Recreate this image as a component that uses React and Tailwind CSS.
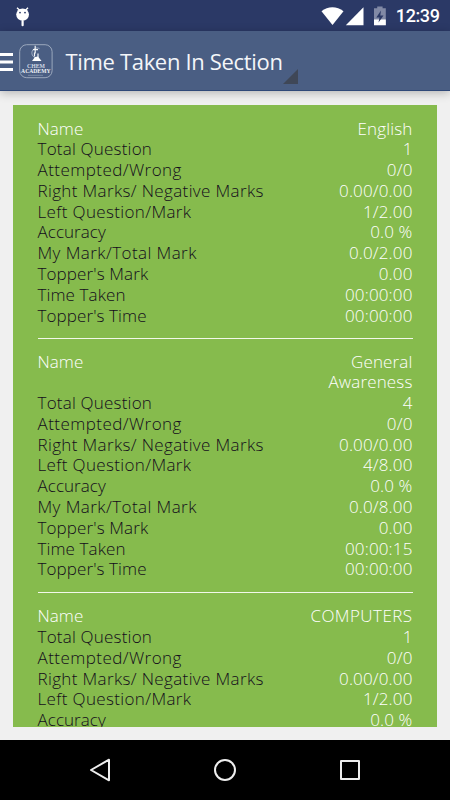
const labels = [
  ["Name", "tracking-[0.05px]"],
  ["Total Question", "tracking-[0.21px]"],
  ["Attempted/Wrong", "tracking-[0.45px]"],
  ["Right Marks/ Negative Marks", "tracking-[0.36px]"],
  ["Left Question/Mark", "tracking-[0.36px]"],
  ["Accuracy", "tracking-[0.05px]"],
  ["My Mark/Total Mark", "tracking-[0.43px]"],
  ["Topper's Mark", "tracking-[0.12px]"],
  ["Time Taken", "tracking-[0.1px]"],
  ["Topper's Time", "tracking-[0.1px]"],
];

const sections = [
  ["English", "1", "0/0", "0.00/0.00", "1/2.00", "0.0 %", "0.0/2.00", "0.00", "00:00:00", "00:00:00"],
  ["General Awareness", "4", "0/0", "0.00/0.00", "4/8.00", "0.0 %", "0.0/8.00", "0.00", "00:00:15", "00:00:00"],
  ["COMPUTERS", "1", "0/0", "0.00/0.00", "1/2.00", "0.0 %", "0.0/2.00", "0.00", "00:00:00", "00:00:00"],
];

function StatusBar() {
  return (
    <div className="flex h-[31px] shrink-0 items-center bg-[#2b3966] pl-[15px] pr-[10.5px] text-white">
      <svg width="16" height="20" viewBox="0 0 16 20" className="mt-0.5">
        <path d="M2 0.8L4.7 3.2M13 0.8L10.5 3.2" stroke="#fff" strokeWidth="1.4" />
        <ellipse cx="7.6" cy="7.6" rx="6.4" ry="6.2" fill="#fff" />
        <rect x="6.5" y="13" width="2.2" height="6.3" rx="1" fill="#fff" />
        <circle cx="5" cy="5.6" r="0.9" fill="#2b3966" />
        <circle cx="10" cy="5.6" r="0.9" fill="#2b3966" />
      </svg>
      <svg width="66" height="20" viewBox="0 0 66 20" className="ml-auto mr-[9px]">
        <path d="M0.5 5.2C6.8 -0.2 16 -0.2 22.5 5.2L11.5 19Z" fill="#fff" />
        <path d="M24.8 19.2L42.5 1.2V19.2Z" fill="#fff" />
        <path d="M53 2.2h3.2V0.4h5.4v1.8h3.2v17H53z" fill="#8189a5" />
        <path d="M53 13.5h11.8v5.7H53z" fill="#fff" />
        <path d="M60 4.5L55.3 11.4h3.2l-1 5.2 5-7h-3.2z" fill="#2b3966" />
      </svg>
      <span className="mt-px font-[Roboto] text-[18px] font-medium leading-none tracking-[-0.4px]">12:39</span>
    </div>
  );
}

function Logo() {
  return (
    <svg width="34" height="35" viewBox="0 0 34 35" className="ml-[5.5px] mt-0.5">
      <rect x="0.7" y="0.7" width="32.4" height="33" rx="7" fill="none" stroke="#a4b0c3" strokeWidth="0.9" />
      <path d="M20.5 4.7a5 5 0 1 0-1 9" fill="none" stroke="#b9c4d5" strokeWidth="0.8" />
      <path d="M16.2 1.8v7.8M14 5.6h5M15.5 8.5v4M19 9.5v4" fill="none" stroke="#f1f4f8" strokeWidth="1.2" />
      <path d="M13 17h9.5l-3.5-4.5-3 0.5z" fill="#fff" />
      <text x="17" y="23.8" textAnchor="middle" textLength="18" lengthAdjust="spacingAndGlyphs" fontFamily="Liberation Serif, serif" fontSize="7" fontWeight="700" fill="#cfd8e4">CHEM</text>
      <text x="16.8" y="29.4" textAnchor="middle" textLength="29.5" lengthAdjust="spacingAndGlyphs" fontFamily="Liberation Serif, serif" fontSize="7" fontWeight="700" fill="#eef2f7">ACADEMY</text>
      <path d="M9 31.3h15" stroke="#8d9cb5" strokeWidth="0.7" />
    </svg>
  );
}

function AppBar() {
  return (
    <div className="relative z-10 flex h-[60px] shrink-0 items-center border-b border-[#2f4878] bg-[#4a5e83] shadow-[0_2px_9px_rgba(0,0,0,0.25)]">
      <svg width="13" height="18" viewBox="0 0 13 18" className="mt-[3px]" fill="#fff">
        <path d="M0 0h13v3H0zM0 7.5h13v3H0zM0 15h13v3H0z" />
      </svg>
      <Logo />
      <h1 className="ml-[13px] whitespace-nowrap text-[22px] font-normal leading-none tracking-[-0.33px] text-[#f4f6f9]">Time Taken In Section</h1>
      <svg width="15" height="15" viewBox="0 0 15 15" className="absolute left-[283px] top-[38px]">
        <path d="M15 0V15H0Z" fill="#3f4757" />
      </svg>
    </div>
  );
}

function Section({ values, last }) {
  return (
    <div>
      {labels.map(([label, tracking], i) => (
        <div key={label} className={"flex justify-between pb-[1.1px] leading-[19.7px] " + (i === 0 ? "text-white" : "text-[#130c1c]")}>
          <span className={"whitespace-nowrap " + tracking}>{label}</span>
          <span className={"max-w-[106px] text-right text-white " + (values[i] === "COMPUTERS" ? "tracking-[0.45px]" : "tracking-[0.15px]")}>
            {values[i]}
          </span>
        </div>
      ))}
      {!last && <div className="mb-[13px] mt-3 h-px bg-[#f2f8ea]" />}
    </div>
  );
}

function NavBar() {
  return (
    <div className="flex h-[60px] shrink-0 items-center justify-between bg-black pl-[89px] pr-[89px]">
      <svg width="22" height="24" viewBox="0 0 22 24" fill="none" stroke="#eee" strokeWidth="2" strokeLinejoin="round">
        <path d="M20 1.7V22.3L2 12Z" />
      </svg>
      <svg width="24" height="24" viewBox="0 0 24 24" fill="none" stroke="#eee" strokeWidth="2">
        <circle cx="12" cy="12" r="10" />
      </svg>
      <svg width="22" height="22" viewBox="0 0 22 22" fill="none" stroke="#eee" strokeWidth="2" strokeLinejoin="round">
        <rect x="2" y="2" width="18" height="18" />
      </svg>
    </div>
  );
}

export default function App() {
  return (
    <div className="flex h-[800px] w-[450px] flex-col overflow-hidden bg-[#f0f0f0] font-['Open_Sans',sans-serif]">
      <StatusBar />
      <AppBar />
      <div className="mx-[13px] mb-[13px] mt-[14px] min-h-0 flex-1 overflow-hidden bg-[#86bb4d] px-[24.5px] pt-[13.5px] text-[17px] font-light">
        {sections.map((values, i) => (
          <Section key={values[0]} values={values} last={i === sections.length - 1} />
        ))}
      </div>
      <NavBar />
    </div>
  );
}
